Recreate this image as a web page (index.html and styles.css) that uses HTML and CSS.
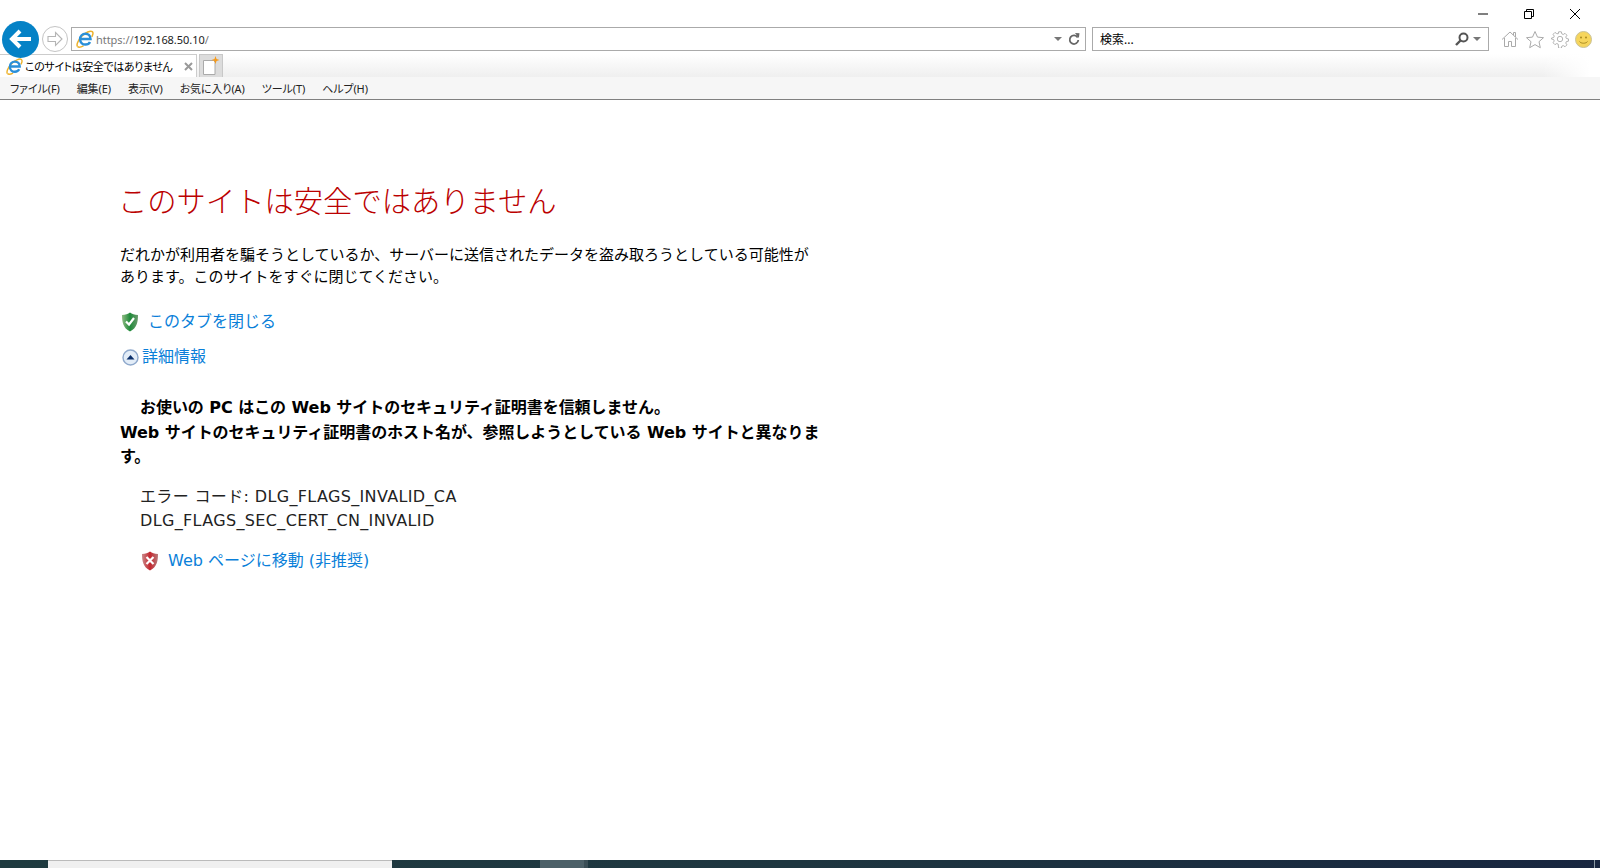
FILE: index.html
```html
<!DOCTYPE html>
<html lang="ja">
<head>
  <meta charset="UTF-8">
  <meta name="viewport" content="width=device-width, initial-scale=1.0">
  <title>このサイトは安全ではありません</title>
  <link rel="stylesheet" href="styles.css">
</head>
<body>
  <svg class="defs" width="0" height="0">
    <defs>
      <g id="ieLogo">
        <path d="M1.500 16.500C.2 15 1.800 10.500 5.500 6.500 9.500 2.300 14.500.2 16.300 1.600c1.200 1 .7 3-.5 5.200" fill="none" stroke="#edb22c" stroke-width="1.500"/>
        <path d="M1.500 16.500c1.200 1.200 3.600.6 6-.6" fill="none" stroke="#edb22c" stroke-width="1.500"/>
        <path d="M4.700 9h9.800c0-3.300-2.200-5.200-5-5.200-3.100 0-5.400 2.400-5.400 5.400s2.300 5.400 5.400 5.400c2.100 0 3.700-1 4.500-2.600" fill="none" stroke="#2a8fd8" stroke-width="2.500"/>
      </g>
    </defs>
  </svg>

  <div class="chrome">
    <div class="caption">
      <button class="win-btn">
        <svg width="10" height="10" viewBox="0 0 10 10"><path d="M0 5h10" stroke="#000" stroke-width="1"/></svg>
      </button>
      <button class="win-btn">
        <svg width="10" height="10" viewBox="0 0 10 10"><path d="M.5 2.500h7v7h-7zM2.500 2.500v-2h7v7h-2" fill="none" stroke="#000"/></svg>
      </button>
      <button class="win-btn">
        <svg width="10" height="10" viewBox="0 0 10 10"><path d="M0 0l10 10M10 0L0 10" stroke="#000" stroke-width="1"/></svg>
      </button>
    </div>

    <div class="navbar">
      <button class="back">
        <svg width="26" height="22" viewBox="0 0 26 22"><path d="M12 3l-8 8 8 8M4.500 11H23" fill="none" stroke="#fff" stroke-width="4"/></svg>
      </button>
      <button class="forward">
        <svg width="18" height="16" viewBox="0 0 18 16"><path d="M9.500 1.500L16 8l-6.500 6.500v-4H2v-5h7.500z" fill="none" stroke="#b5b5b5" stroke-width="1.100"/></svg>
      </button>
      <div class="address">
        <svg class="ie-icon" width="18" height="18" viewBox="0 0 18 18"><use href="#ieLogo"/></svg>
        <span class="url"><span class="scheme">https://</span>192.168.50.10<span class="scheme">/</span></span>
        <span class="caret"></span>
        <svg class="refresh" width="12" height="14" viewBox="0 0 12 14"><path d="M9.700 5.500A4.300 4.300 0 1 0 10.300 8" fill="none" stroke="#666" stroke-width="1.800"/><path d="M7 1l4.500.2-.6 4.800z" fill="#666"/></svg>
      </div>
      <div class="search">
        <span class="search-label">検索...</span>
        <svg width="16" height="16" viewBox="0 0 16 16"><circle cx="9.500" cy="6.500" r="4" fill="none" stroke="#555" stroke-width="2"/><path d="M6.500 9.500L2 14" stroke="#555" stroke-width="2.400"/></svg>
        <span class="caret"></span>
      </div>
      <div class="tools">
        <svg width="18" height="18" viewBox="0 0 18 18"><path d="M1 9.500L9 2l8 7.500M3.500 8v8.500h4v-5h3v5h4V8M12.500 5V2.500h2v4.500" fill="none" stroke="#aaa"/></svg>
        <svg width="20" height="19" viewBox="0 0 20 19"><path d="M10 1.500l2.500 5.600 6 .6-4.500 4 1.300 6-5.300-3.100-5.300 3.100 1.300-6-4.500-4 6-.6z" fill="none" stroke="#aaa"/></svg>
        <svg width="18" height="18" viewBox="-1 -1 20 20"><path d="M7.500 1h3l.5 2.300 1.600.7 2-1.300 2.100 2.100-1.300 2 .7 1.600 2.300.5v2.500l-2.300.5-.7 1.600 1.300 2-2.100 2.100-2-1.300-1.600.7-.5 2.300h-3L7 14.700l-1.600-.7-2 1.300-2.100-2.100 1.300-2-.7-1.600-2.300-.5V7.900l2.300-.5.700-1.600-1.300-2 2.100-2.100 2 1.300L7 3.300z" fill="none" stroke="#aaa"/><circle cx="9" cy="9" r="3" fill="none" stroke="#aaa"/></svg>
        <svg class="smiley" width="17" height="17" viewBox="0 0 17 17"><circle cx="8.500" cy="8.500" r="8" fill="#f6d55c" stroke="#c9c29a"/><circle cx="6" cy="6.500" r="1" fill="#a98a20"/><circle cx="11" cy="6.500" r="1" fill="#a98a20"/><path d="M4.500 10.500c1.500 2.300 6.500 2.300 8 0" fill="none" stroke="#a98a20"/></svg>
      </div>
    </div>

    <div class="tabstrip">
      <div class="tab">
        <svg class="ie-icon" width="17" height="17" viewBox="0 0 18 18"><use href="#ieLogo"/></svg>
        <span class="tab-title">このサイトは安全ではありません</span>
        <svg class="tab-close" width="9" height="9" viewBox="0 0 9 9"><path d="M1 1l7 7M8 1L1 8" stroke="#999" stroke-width="2"/></svg>
      </div>
      <div class="newtab">
        <svg width="18" height="20" viewBox="0 0 18 20"><path d="M1.500 4.500h10l1.500 1.500v12.500h-11.500z" fill="#fff" stroke="#aaa"/><path d="M13.500 0l1 3 3 1-3 1-1 3-1-3-3-1 3-1z" fill="#f59a1b"/></svg>
      </div>
    </div>

    <div class="menubar">
      <span>ファイル(F)</span>
      <span>編集(E)</span>
      <span>表示(V)</span>
      <span>お気に入り(A)</span>
      <span>ツール(T)</span>
      <span>ヘルプ(H)</span>
    </div>
  </div>

  <div class="content">
    <h1>このサイトは安全ではありません</h1>
    <p class="lead">だれかが利用者を騙そうとしているか、サーバーに送信されたデータを盗み取ろうとしている可能性があります。このサイトをすぐに閉じてください。</p>

    <div class="action">
      <svg width="20" height="20" viewBox="0 0 20 20">
        <defs><linearGradient id="greenShield" x1="0" y1="0" x2="1" y2="0"><stop offset="0" stop-color="#8fbb83"/><stop offset=".5" stop-color="#1f8a3a"/><stop offset="1" stop-color="#6a9a6c"/></linearGradient></defs>
        <path d="M10 .5c2 1.600 4.500 2.500 8 2.500 0 7-1 13-8 16.500C3 16 2 10 2 3c3.500 0 6-.9 8-2.500z" fill="url(#greenShield)"/>
        <path d="M6 9.500l3 3 5-6.500" fill="none" stroke="#fff" stroke-width="2.200"/>
      </svg>
      <a class="link">このタブを閉じる</a>
    </div>

    <div class="details">
      <svg width="17" height="17" viewBox="0 0 17 17">
        <circle cx="8.500" cy="8.500" r="7.500" fill="#e3edf8" stroke="#8fa9cc" stroke-width="1.400"/>
        <path d="M4.500 10.500l4-4.500 4 4.500z" fill="#0b2f6b"/>
      </svg>
      <a class="link">詳細情報</a>
    </div>

    <p class="cert"><span class="indent">お使いの PC はこの Web サイトのセキュリティ証明書を信頼しません。</span><br>Web サイトのセキュリティ証明書のホスト名が、参照しようとしている Web サイトと異なります。</p>

    <div class="errors">
      <div>エラー コード: DLG_FLAGS_INVALID_CA</div>
      <div>DLG_FLAGS_SEC_CERT_CN_INVALID</div>
    </div>

    <div class="action proceed">
      <svg width="20" height="20" viewBox="0 0 20 20">
        <defs><linearGradient id="redShield" x1="0" y1="0" x2="1" y2="0"><stop offset="0" stop-color="#c98a8a"/><stop offset=".5" stop-color="#c4262e"/><stop offset="1" stop-color="#b77a7a"/></linearGradient></defs>
        <path d="M10 .5c2 1.600 4.500 2.500 8 2.500 0 7-1 13-8 16.500C3 16 2 10 2 3c3.500 0 6-.9 8-2.500z" fill="url(#redShield)"/>
        <path d="M6.500 6l7 7M13.500 6l-7 7" stroke="#fff" stroke-width="2.200"/>
      </svg>
      <a class="link">Web ページに移動 (非推奨)</a>
    </div>
  </div>

  <div class="taskbar">
    <div class="start"></div>
    <div class="task-search"></div>
    <div class="task-gap"></div>
    <div class="task-active"></div>
    <div class="task-edge"></div>
    <div class="task-fill"></div>
    <div class="clock">12:33</div>
    <div class="show-desktop"></div>
  </div>
</body>
</html>
```

FILE: styles.css
```css
html, body {
  height: 100%;
}

body {
  margin: 0;
  height: 868px;
  overflow: hidden;
  display: flex;
  flex-direction: column;
  background: #fff;
  font-family: "Noto Sans", "Noto Sans CJK JP", sans-serif;
  color: #000;
}

button {
  border: none;
  background: none;
  padding: 0;
  display: flex;
  align-items: center;
  justify-content: center;
}

.defs {
  position: absolute;
}

.chrome {
  flex: none;
  font-size: 11px;
}

.caption {
  height: 27px;
  display: flex;
  justify-content: flex-end;
  padding-right: 20px;
  gap: 36px;
  padding-top: 9px;
  box-sizing: border-box;
}

.win-btn {
  width: 10px;
  height: 10px;
}

.navbar {
  height: 24px;
  display: flex;
  align-items: center;
  position: relative;
  z-index: 1;
  margin-bottom: 3px;
}

.back {
  width: 37px;
  height: 37px;
  margin: 0 3px 0 2px;
  border-radius: 50%;
  background: #0582c6;
  flex: none;
}

.forward {
  width: 26px;
  height: 26px;
  border: 1px solid #c4c4c4;
  border-radius: 50%;
  box-sizing: border-box;
  margin-right: 3px;
  flex: none;
}

.address {
  width: 1015px;
  height: 24px;
  border: 1px solid #aaa;
  box-sizing: border-box;
  display: flex;
  align-items: center;
  padding: 0 5px 0 4px;
  flex: none;
}

.ie-icon {
  flex: none;
}

.url {
  margin-left: 2px;
  flex: 1;
  font-size: 11px;
  letter-spacing: -0.05px;
  color: #222;
}

.scheme {
  color: #777;
}

.caret {
  width: 0;
  height: 0;
  border-left: 4px solid transparent;
  border-right: 4px solid transparent;
  border-top: 4px solid #777;
  flex: none;
}

.refresh {
  margin-left: 6px;
}

.search {
  width: 397px;
  height: 24px;
  margin-left: 6px;
  border: 1px solid #aaa;
  box-sizing: border-box;
  display: flex;
  align-items: center;
  padding: 0 7px;
  gap: 3px;
  flex: none;
  font-size: 12px;
}

.search-label {
  flex: 1;
}

.tools {
  margin-left: 12px;
  display: flex;
  align-items: center;
  gap: 6px;
}

.tabstrip {
  height: 23px;
  display: flex;
  background: linear-gradient(to right, rgba(255, 255, 255, 0) 97%, #fff 100%), linear-gradient(to bottom, #fff 0%, #efefef 100%);
  margin-right: 10px;
}

.tab {
  width: 197px;
  box-sizing: border-box;
  display: flex;
  align-items: center;
  padding-left: 6px;
  background: #fff;
  border: 1px solid #ccc;
  border-bottom: none;
  border-left: none;
  font-feature-settings: "palt";
}

.tab-title {
  margin-left: 2px;
  flex: 1;
  white-space: nowrap;
  letter-spacing: -0.4px;
}

.tab-close {
  margin-right: 3px;
}

.newtab {
  width: 24px;
  margin-left: 2px;
  background: #dcdcdc;
  border: 1px solid #c8c8c8;
  border-bottom: none;
  box-sizing: border-box;
  display: flex;
  align-items: center;
  justify-content: center;
}

.menubar {
  height: 23px;
  background: #f6f6f6;
  border-bottom: 1px solid #808080;
  box-sizing: border-box;
  display: flex;
  align-items: center;
  gap: 17px;
  padding-left: 10px;
  font-feature-settings: "palt";
  letter-spacing: -0.1px;
  color: #222;
}

.content {
  flex: 1;
  padding: 79px 0 0 120px;
  width: 720px;
  font-family: "DejaVu Sans", "Noto Sans CJK JP", sans-serif;
  font-size: 16px;
  line-height: 24px;
}

h1 {
  margin: 0 0 0 -2px;
  font-size: 29.3px;
  line-height: 46px;
  font-weight: 300;
  color: #bb0000;
  white-space: nowrap;
}

.lead {
  margin: 19px 0 0;
  width: 695px;
  font-size: 15px;
  line-height: 22px;
}

.action {
  margin-top: 22px;
  display: flex;
  align-items: center;
  gap: 8px;
}

.link {
  color: #0a7fd9;
}

.details {
  margin-top: 11px;
  display: flex;
  align-items: center;
  gap: 3px;
  padding-left: 2px;
}

.cert {
  margin: 27px 0 0;
  font-weight: 700;
  line-height: 24.5px;
  letter-spacing: -0.05px;
}

.indent {
  padding-left: 20px;
}

.errors {
  margin: 15px 0 0 20px;
  color: #222;
  letter-spacing: 0.35px;
}

.proceed {
  margin: 16px 0 0 20px;
}

.taskbar {
  flex: none;
  height: 8px;
  display: flex;
  overflow: hidden;
  background: linear-gradient(to right, #1f3b40 0%, #1e3640 50%, #182640 100%);
}

.start {
  width: 48px;
}

.task-search {
  width: 344px;
  background: #f0f0f0;
  border-top: 1px solid #bbb;
  box-sizing: border-box;
}

.task-gap {
  width: 148px;
}

.task-active {
  width: 44px;
  background: #4c6068;
}

.task-edge {
  width: 4px;
  background: #3a4e56;
}

.task-fill {
  flex: 1;
}

.clock {
  width: 70px;
  padding-top: 6px;
  color: #fff;
  font-size: 12px;
  line-height: 14px;
}

.show-desktop {
  width: 5px;
  border-left: 1px solid #8a99a3;
}
```
